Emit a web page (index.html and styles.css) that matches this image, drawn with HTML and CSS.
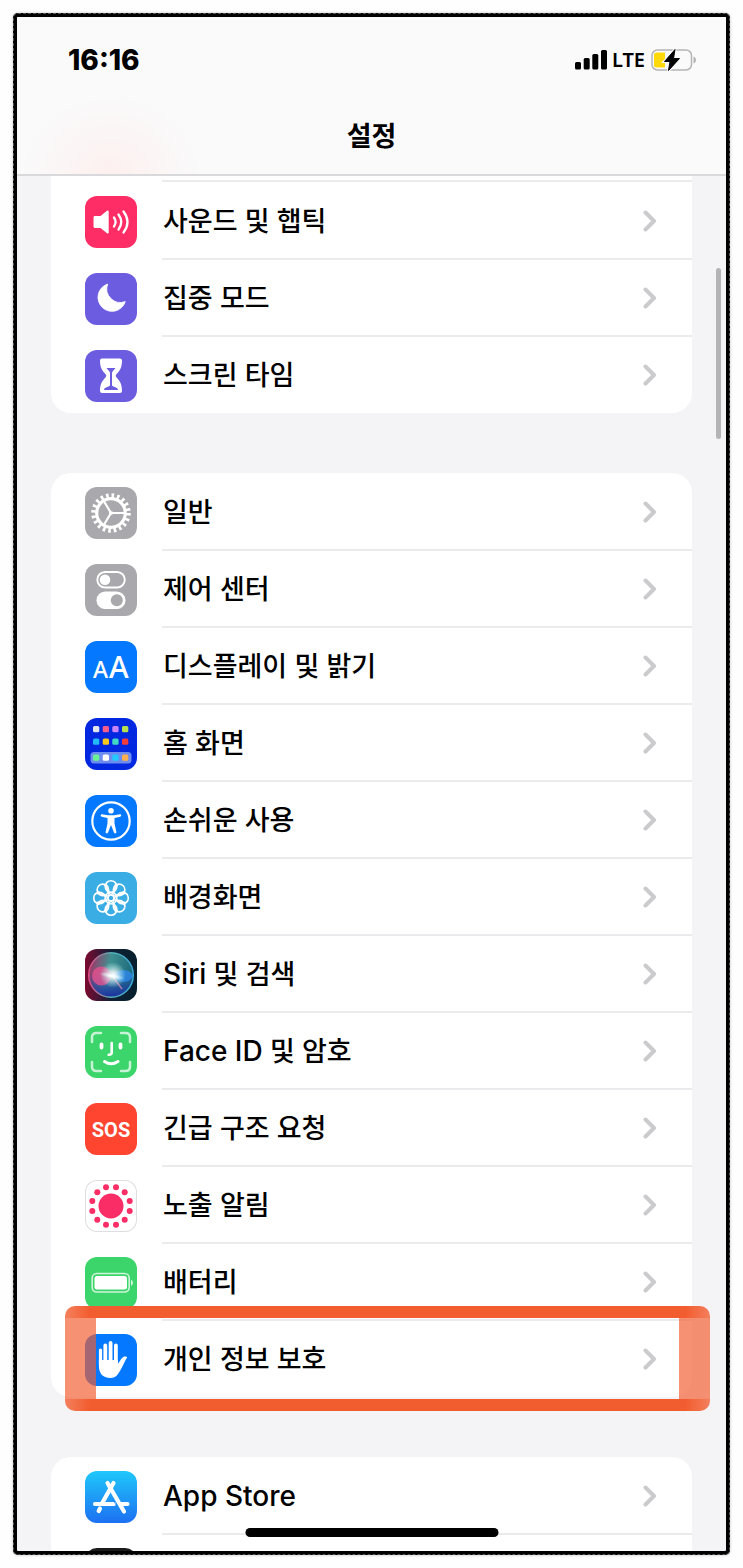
FILE: index.html
```html
<!DOCTYPE html>
<html lang="ko">
<head>
<meta charset="UTF-8">
<title>설정</title>
<meta name="viewport" content="width=device-width, initial-scale=1.0">

<link rel="stylesheet" href="styles.css">
</head>

<body>

<!-- shared chevron -->
<svg class="defs">
    <symbol id="chevron" viewBox="0 0 14 22">
        <path d="M2.500 2.500L11 11L2.500 19.500" fill="none" stroke="#cbcbce" stroke-width="4" stroke-linecap="round" stroke-linejoin="round"/>
    </symbol>
</svg>

<div class="phone">

<header class="header">
    <div class="status">
        <div class="time">16:16</div>
        <svg class="signal" viewBox="0 0 32 20">
            <rect x="0" y="12" width="6" height="7.500" rx="1.500"/>
            <rect x="8.700" y="8" width="6" height="11.500" rx="1.500"/>
            <rect x="17.300" y="4" width="6" height="15.500" rx="1.500"/>
            <rect x="26" y="0" width="6" height="19.500" rx="1.500"/>
        </svg>
        <div class="network">LTE</div>
        <svg class="charge" viewBox="0 0 46 22">
            <rect x="1" y="1" width="39.500" height="20" rx="5.500" fill="none" stroke="#b4b4b6" stroke-width="1.500"/>
            <path d="M42.500 7.500c3.300 1 3.300 6 0 7z" fill="#b4b4b6"/>
            <path d="M5.500 3.500H14V18.500H5.500A2.500 2.500 0 0 1 3 16V6A2.500 2.500 0 0 1 5.500 3.500Z" fill="#ffd90a"/>
            <path d="M24 0.500L13.500 12.500H19L17.500 21.500L28.500 9.500H22.500Z" stroke="#fbfbfc" stroke-width="3"/>
            <path d="M24 0.500L13.500 12.500H19L17.500 21.500L28.500 9.500H22.500Z" stroke="#000" stroke-width="1" stroke-linejoin="round"/>
        </svg>
    </div>
    <h1 class="title">설정</h1>
</header>

<main class="content">

<ul class="group cut-top">
    <li class="row-tail"></li>
    <li><a class="row" href="#">
        <svg class="icon pink" viewBox="0 0 52 52">
            <path d="M10 20h5.500L22 14.800c.8-.6 1.700-.3 1.700.8v20.800c0 1.100-.9 1.400-1.700.8L15.500 32H10c-1 0-1.500-.6-1.500-1.500v-9c0-.9.500-1.500 1.500-1.500z" fill="#fff"/>
            <path d="M29 21.500q3.200 4.500 0 9M33.500 18.500q5.500 7.500 0 15M38.500 15.500q8 10.500 0 21" fill="none" stroke="#fff" stroke-width="2.300" stroke-linecap="round"/>
        </svg>
        <span class="label">사운드 및 햅틱</span>
        <svg class="arrow"><use href="#chevron"/></svg>
    </a></li>
    <li><a class="row" href="#">
        <svg class="icon purple" viewBox="0 0 52 52">
            <path d="M22.700 11A14 14 0 1 0 40.300 28.600A13.700 13.700 0 0 1 22.700 11Z" fill="#fff" stroke="#fff" stroke-width=".8" stroke-linejoin="round"/>
        </svg>
        <span class="label">집중 모드</span>
        <svg class="arrow"><use href="#chevron"/></svg>
    </a></li>
    <li><a class="row" href="#">
        <svg class="icon purple" viewBox="0 0 52 52">
            <path d="M17 8.500h18q2 0 2 2c0 7-2 10-5.500 13.500q-1.700 1.700 0 3.400C35 31 37 34 37 41q0 2-2 2H17q-2 0-2-2c0-7 2-10 5.500-13.600q1.700-1.700 0-3.400C17 20.500 15 17.500 15 10.500q0-2 2-2z" fill="#fff"/>
            <path d="M21.500 18h9c-1 2-3.500 3-3.500 5v12.500c1 1.500 6 1.500 6 4.500H19c0-3 5-3 6-4.500V23c0-2-2.500-3-3.500-5z" fill="#6b5ce0"/>
        </svg>
        <span class="label">스크린 타임</span>
        <svg class="arrow"><use href="#chevron"/></svg>
    </a></li>
</ul>

<ul class="group">
    <li><a class="row" href="#">
        <svg class="icon gray" viewBox="0 0 52 52">
            <g fill="none" stroke="#fff">
                <circle cx="26" cy="26" r="17.500" stroke-width="4.500" stroke-dasharray="2.600 2.898"/>
                <circle cx="26" cy="26" r="14.300" stroke-width="3.200"/>
                <path d="M26 26H40M26 26L18.500 13.500M26 26L18.500 38.500" stroke-width="2.200"/>
            </g>
            <circle cx="26" cy="26" r="2" fill="#fff"/>
        </svg>
        <span class="label">일반</span>
        <svg class="arrow"><use href="#chevron"/></svg>
    </a></li>
    <li><a class="row" href="#">
        <svg class="icon gray" viewBox="0 0 52 52">
            <rect x="12.300" y="8" width="27.500" height="15.500" rx="7.700" fill="none" stroke="#fff" stroke-width="1.900"/>
            <circle cx="20" cy="15.700" r="5.300" fill="#fff"/>
            <rect x="11.500" y="27.500" width="29" height="17.500" rx="8.700" fill="#fff"/>
            <circle cx="31.800" cy="36.200" r="6" fill="#a9a8ad"/>
        </svg>
        <span class="label">제어 센터</span>
        <svg class="arrow"><use href="#chevron"/></svg>
    </a></li>
    <li><a class="row" href="#">
        <svg class="icon blue" viewBox="0 0 52 52">
            <text x="8" y="37" class="small-a">A</text>
            <text x="24" y="37" class="big-a">A</text>
        </svg>
        <span class="label">디스플레이 및 밝기</span>
        <svg class="arrow"><use href="#chevron"/></svg>
    </a></li>
    <li><a class="row" href="#">
        <svg class="icon navy" viewBox="0 0 52 52">
            <rect x="5.500" y="34" width="41" height="11.500" rx="3.500" fill="#6d8cf0"/>
            <rect x="8" y="8" width="6.300" height="6.300" rx="1.500" fill="#e3e3ec"/>
            <rect x="17.700" y="8" width="6.300" height="6.300" rx="1.500" fill="#fb5c8c"/>
            <rect x="27.300" y="8" width="6.300" height="6.300" rx="1.500" fill="#c984f7"/>
            <rect x="37" y="8" width="6.300" height="6.300" rx="1.500" fill="#b8e04c"/>
            <rect x="8" y="20.500" width="6.300" height="6.300" rx="1.500" fill="#21b9f8"/>
            <rect x="17.700" y="20.500" width="6.300" height="6.300" rx="1.500" fill="#fcc81c"/>
            <rect x="27.300" y="20.500" width="6.300" height="6.300" rx="1.500" fill="#43d9c4"/>
            <rect x="37" y="20.500" width="6.300" height="6.300" rx="1.500" fill="#f73c3c"/>
            <rect x="8" y="36.500" width="6.300" height="6.300" rx="1.500" fill="#6cf094"/>
            <rect x="17.700" y="36.500" width="6.300" height="6.300" rx="1.500" fill="#fff"/>
            <rect x="27.300" y="36.500" width="6.300" height="6.300" rx="1.500" fill="#21c9fc"/>
            <rect x="37" y="36.500" width="6.300" height="6.300" rx="1.500" fill="#fdb050"/>
        </svg>
        <span class="label">홈 화면</span>
        <svg class="arrow"><use href="#chevron"/></svg>
    </a></li>
    <li><a class="row" href="#">
        <svg class="icon blue" viewBox="0 0 52 52">
            <circle cx="26" cy="26" r="18.700" fill="none" stroke="#fff" stroke-width="2.200"/>
            <circle cx="26" cy="15.700" r="2.800" fill="#fff"/>
            <path d="M17 19.300l6 1h6l6-1c1.500-.1 1.800 2 .3 2.400L29.500 23v5.500l1.900 8.500c.2 1.600-1.800 2-2.400.5L26 30l-3 7.500c-.6 1.500-2.600 1.100-2.400-.5l1.900-8.500V23l-5.800-1.300c-1.500-.4-1.200-2.500.3-2.400z" fill="#fff"/>
        </svg>
        <span class="label">손쉬운 사용</span>
        <svg class="arrow"><use href="#chevron"/></svg>
    </a></li>
    <li><a class="row" href="#">
        <svg class="icon sky" viewBox="0 0 52 52">
            <g fill="none" stroke="#fff" stroke-width="1.600">
                <circle cx="26" cy="14.500" r="5.800"/>
                <circle cx="34.100" cy="17.900" r="5.800"/>
                <circle cx="37.500" cy="26" r="5.800"/>
                <circle cx="34.100" cy="34.100" r="5.800"/>
                <circle cx="26" cy="37.500" r="5.800"/>
                <circle cx="17.900" cy="34.100" r="5.800"/>
                <circle cx="14.500" cy="26" r="5.800"/>
                <circle cx="17.900" cy="17.900" r="5.800"/>
                <circle cx="26" cy="26" r="3"/>
                <g stroke-width="1.300">
                    <path id="petal" d="M21.500 11.500Q21.500 19 26 23Q30.500 19 30.500 11.500"/>
                    <use href="#petal" transform="rotate(45 26 26)"/>
                    <use href="#petal" transform="rotate(90 26 26)"/>
                    <use href="#petal" transform="rotate(135 26 26)"/>
                    <use href="#petal" transform="rotate(180 26 26)"/>
                    <use href="#petal" transform="rotate(225 26 26)"/>
                    <use href="#petal" transform="rotate(270 26 26)"/>
                    <use href="#petal" transform="rotate(315 26 26)"/>
                </g>
            </g>
        </svg>
        <span class="label">배경화면</span>
        <svg class="arrow"><use href="#chevron"/></svg>
    </a></li>
    <li><a class="row" href="#">
        <svg class="icon siri" viewBox="0 0 52 52">
            <defs>
                <linearGradient id="orb" x1="0" y1="0" x2="1" y2=".2">
                    <stop offset="0" stop-color="#b02860"/>
                    <stop offset=".5" stop-color="#3f8f90"/>
                    <stop offset="1" stop-color="#1f6c7c"/>
                </linearGradient>
                <linearGradient id="orb-low" x1="0" y1="0" x2="0" y2="1">
                    <stop offset=".45" stop-color="#1c3fa8" stop-opacity="0"/>
                    <stop offset="1" stop-color="#1c2fa0"/>
                </linearGradient>
                <linearGradient id="orb-ring" x1="0" y1="0" x2="1" y2="0">
                    <stop offset="0" stop-color="#f0508c"/>
                    <stop offset=".5" stop-color="#5bbfc0"/>
                    <stop offset="1" stop-color="#3fb4e8"/>
                </linearGradient>
                <radialGradient id="glow">
                    <stop offset="0" stop-color="#fff"/>
                    <stop offset=".25" stop-color="#fff" stop-opacity=".8"/>
                    <stop offset="1" stop-color="#bff" stop-opacity="0"/>
                </radialGradient>
            </defs>
            <circle cx="26" cy="26" r="22" fill="url(#orb)"/>
            <circle cx="26" cy="26" r="22" fill="url(#orb-low)"/>
            <circle cx="16.500" cy="27" r="9.500" fill="#f04f90" opacity=".75"/>
            <ellipse cx="38.500" cy="27" rx="9" ry="6" fill="#2f8bf0" opacity=".75"/>
            <path d="M28 28L37 40" stroke="#e08cb0" stroke-width="1.500" opacity=".7"/>
            <circle cx="28" cy="26" r="13" fill="url(#glow)"/>
            <ellipse cx="27" cy="27" rx="13" ry="3" fill="url(#glow)" transform="rotate(12 27 27)"/>
            <circle cx="26" cy="26" r="22.300" fill="none" stroke="url(#orb-ring)" stroke-width="1.500" opacity=".9"/>
        </svg>
        <span class="label"><span class="latin">Siri</span> 및 검색</span>
        <svg class="arrow"><use href="#chevron"/></svg>
    </a></li>
    <li><a class="row" href="#">
        <svg class="icon green" viewBox="0 0 52 52">
            <g fill="none" stroke="#fff" stroke-linecap="round">
                <path d="M7 16V11.500Q7 7 11.500 7H16M36 7h4.500Q45 7 45 11.500V16M45 36v4.500Q45 45 40.500 45H36M16 45h-4.500Q7 45 7 40.500V36" stroke-width="2.500" opacity=".7"/>
                <path d="M16.500 18.500v3M35.500 18.500v3" stroke-width="3.800"/>
                <path d="M26.700 17v9.500q0 2.500-3 2.300" stroke-width="2.600"/>
                <path d="M19.500 35.500q6.500 4.500 13.500 0" stroke-width="3"/>
            </g>
        </svg>
        <span class="label"><span class="latin">Face ID</span> 및 암호</span>
        <svg class="arrow"><use href="#chevron"/></svg>
    </a></li>
    <li><a class="row" href="#">
        <svg class="icon red" viewBox="0 0 52 52">
            <text x="26" y="34" class="sos">SOS</text>
        </svg>
        <span class="label">긴급 구조 요청</span>
        <svg class="arrow"><use href="#chevron"/></svg>
    </a></li>
    <li><a class="row" href="#">
        <svg class="icon white" viewBox="0 0 52 52">
            <g fill="#fb2d66">
                <circle cx="26" cy="26" r="12.500"/>
                <circle cx="31" cy="7.300" r="3"/>
                <circle cx="39.700" cy="12.300" r="3"/>
                <circle cx="44.700" cy="21" r="3"/>
                <circle cx="44.700" cy="31" r="3"/>
                <circle cx="39.700" cy="39.700" r="3"/>
                <circle cx="31" cy="44.700" r="3"/>
                <circle cx="21" cy="44.700" r="3"/>
                <circle cx="12.300" cy="39.700" r="3"/>
                <circle cx="7.300" cy="31" r="3"/>
                <circle cx="7.300" cy="21" r="3"/>
                <circle cx="12.300" cy="12.300" r="3"/>
                <circle cx="21" cy="7.300" r="3"/>
            </g>
        </svg>
        <span class="label">노출 알림</span>
        <svg class="arrow"><use href="#chevron"/></svg>
    </a></li>
    <li><a class="row" href="#">
        <svg class="icon green" viewBox="0 0 52 52">
            <rect x="7.200" y="16.500" width="37" height="18.500" rx="4.500" fill="none" stroke="#fff" stroke-width="1.600" opacity=".75"/>
            <rect x="9.500" y="19" width="32.500" height="13.500" rx="2.500" fill="#fff"/>
            <path d="M46 22.800c2.600 1 2.600 5 0 6z" fill="#fff" opacity=".75"/>
        </svg>
        <span class="label">배터리</span>
        <svg class="arrow"><use href="#chevron"/></svg>
    </a></li>
    <li class="marked"><a class="row" href="#">
        <svg class="icon blue" viewBox="0 0 52 52">
            <g stroke="#fff" stroke-linecap="round">
                <path d="M15.500 16v15" stroke-width="3.200"/>
                <path d="M20.300 11.500v18M25.600 9v20M30.900 11.500v18" stroke-width="3.800"/>
            </g>
            <path d="M13.900 26h18.900v3.500c1.500-.5 3-5 5.500-6.500 1.500-.9 4-.3 3.800.6-2.300 3.400-4 8.400-6.600 12.400-2.700 5-5 8-10 8-8 0-11.600-5-11.600-12z" fill="#fff"/>
        </svg>
        <span class="label">개인 정보 보호</span>
        <svg class="arrow"><use href="#chevron"/></svg>
    </a></li>
</ul>

<ul class="group">
    <li><a class="row" href="#">
        <svg class="icon store" viewBox="0 0 52 52">
            <g fill="none" stroke="#fff" stroke-width="4.200" stroke-linecap="round">
                <path d="M28.500 12L17.500 31.500M15 37.500L13.700 40M10 33H29M36.500 33H42.500"/>
                <path d="M22.500 12L39 40.500"/>
            </g>
            <path d="M27.300 27.500l5 8.500" stroke="#1c86f8" stroke-width="0.800"/>
        </svg>
        <span class="label"><span class="latin">App Store</span></span>
        <svg class="arrow"><use href="#chevron"/></svg>
    </a></li>
    <li><a class="row" href="#">
        <svg class="icon black" viewBox="0 0 52 52"></svg>
    </a></li>
</ul>

</main>

<div class="scrollbar"></div>
<div class="home-bar"></div>

</div>

</body>
</html>
```
FILE: styles.css
```css
* {
    box-sizing: border-box;
}

body {
    margin: 0;
    padding: 13px;
    height: 100vh;
    background: #fefefe;
    color: #000;
    font-family: Inter, "Noto Sans CJK KR", sans-serif;
}

.defs {
    display: none;
}

/* PHONE FRAME */
.phone {
    position: relative;
    display: flex;
    flex-direction: column;
    height: 100%;
    border: 4px solid #000;
    border-radius: 5px;
    outline: 1px dashed #555;
    outline-offset: -1px;
    background: #f4f4f7;
    box-shadow: 0 0 3px rgba(0,0,0,0.25);
    overflow: hidden;
}

/* HEADER */
.header {
    flex: none;
    border-bottom: 2px solid #d9d9db;
    background: radial-gradient(ellipse 90px 80px at 94px 158px, #fdf0ef, rgba(253,240,239,0)), #fafafb;
}

.status {
    display: flex;
    align-items: center;
    height: 85px;
    padding: 0 29px 0 51px;
}

.time {
    flex: 1;
    font-size: 28px;
    font-weight: 800;
}

.signal {
    width: 32px;
    height: 20px;
}

.network {
    margin: 0 6px 0 5px;
    font-family: "Noto Sans", sans-serif;
    font-size: 20px;
    font-weight: 600;
}

.charge {
    width: 46px;
    height: 22px;
}

.title {
    margin: 0;
    padding-bottom: 2px;
    font-size: 27px;
    font-weight: 700;
    line-height: 70px;
    text-align: center;
}

/* LIST */
.content {
    flex: 1;
    min-height: 0;
    padding: 0 34px;
    overflow: hidden;
}

.group {
    margin: 0 0 60px;
    padding: 0;
    list-style: none;
    border-radius: 20px;
    background: #fff;
}

.group.cut-top {
    border-radius: 0 0 20px 20px;
}

.row-tail {
    height: 6px;
    margin-left: 111px;
    border-bottom: 2px solid #ebebed;
}

.row {
    position: relative;
    display: flex;
    align-items: center;
    height: 77px;
    padding: 0 35px 0 34px;
    color: #000;
    text-decoration: none;
}

/* separator starts under the label */
li:not(:last-child) > .row::after {
    content: "";
    position: absolute;
    left: 111px;
    right: 0;
    bottom: -1px;
    height: 2px;
    background: #ebebed;
}

.label {
    flex: 1;
    margin: 2px 0 0 26px;
    font-size: 27px;
    font-weight: 500;
    line-height: 40px;
}

.latin {
    font-size: 28px;
}

.arrow {
    width: 14px;
    height: 22px;
}

/* ICONS */
.icon {
    flex: none;
    width: 52px;
    height: 52px;
    margin-top: 2px;
    border-radius: 12px;
}

.pink { background: #ff2d65; }
.purple { background: #6b5ce0; }
.gray { background: #a9a8ad; }
.blue { background: #0479ff; }
.navy { background: #0227e0; }
.sky { background: #3bade5; }
.green { background: #3cd56b; }
.red { background: #ff4430; }
.black { background: #1a1a1a; }

.white {
    background: #fff;
    box-shadow: inset 0 0 0 1px #dedee0;
}

.siri {
    background: linear-gradient(90deg, #7c0a30, #102038 50%, #06202c);
}

.store {
    background: linear-gradient(#1fc8fb, #1d70f2);
}

.small-a,
.big-a {
    fill: #fff;
    font-family: "Noto Sans", sans-serif;
    font-weight: 500;
}

.small-a { font-size: 23px; }
.big-a { font-size: 30px; }

.sos {
    fill: #fff;
    font-family: Roboto, sans-serif;
    font-size: 20px;
    font-weight: 700;
    text-anchor: middle;
}

/* HIGHLIGHT */
.marked {
    position: relative;
}

.marked::after {
    content: "";
    position: absolute;
    top: -14px;
    right: -18px;
    bottom: -14px;
    left: 14px;
    border-radius: 10px;
    background:
        linear-gradient(90deg, rgba(242,93,48,0.3), #f25d30 24px, #f25d30 calc(100% - 24px), rgba(242,93,48,0.3)) top / 100% 12px no-repeat,
        linear-gradient(90deg, rgba(242,93,48,0.3), #f25d30 24px, #f25d30 calc(100% - 24px), rgba(242,93,48,0.3)) bottom / 100% 12px no-repeat,
        linear-gradient(rgba(242,93,48,0.68), rgba(242,93,48,0.68)) left / 31px 100% no-repeat,
        linear-gradient(rgba(242,93,48,0.68), rgba(242,93,48,0.68)) right / 31px 100% no-repeat;
    pointer-events: none;
}

/* OVERLAYS */
.scrollbar {
    position: absolute;
    top: 251px;
    right: 5px;
    width: 5px;
    height: 171px;
    border-radius: 3px;
    background: #b4b4b7;
}

.home-bar {
    position: absolute;
    bottom: 14px;
    left: 50%;
    width: 253px;
    height: 9px;
    border-radius: 5px;
    background: #000;
    transform: translateX(-50%);
}
```
